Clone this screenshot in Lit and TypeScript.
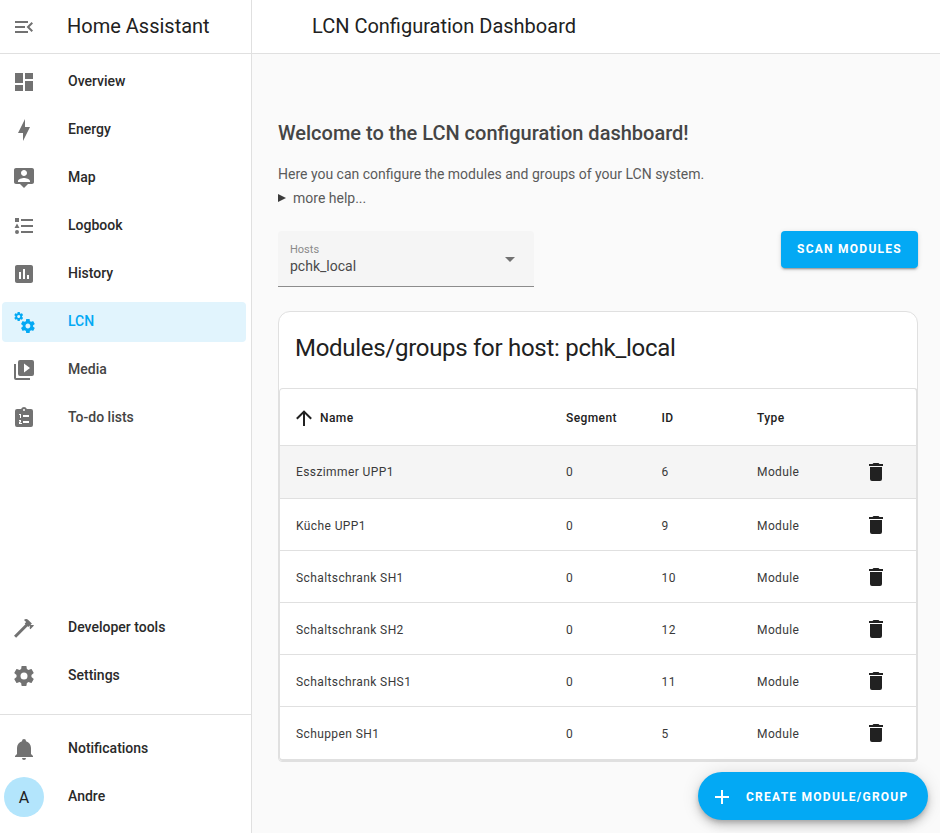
import { LitElement, css, html, svg } from 'lit';
import { customElement } from 'lit/decorators.js';

const ICONS: Record<string, string> = {
  menuOpen: 'M21,15.61L19.59,17L14.58,12L19.59,7L21,8.39L17.44,12L21,15.61M3,6H16V8H3V6M3,13V11H13V13H3M3,18V16H16V18H3Z',
  dashboard: 'M13,3V9H21V3M13,21H21V11H13M3,21H11V15H3M3,13H11V3H3V13Z',
  bolt: 'M11 15H6L13 1V9H18L11 23V15Z',
  map: 'M20 2H4C2.89 2 2 2.89 2 4V16C2 17.11 2.9 18 4 18H8L12 22L16 18H20C21.11 18 22 17.11 22 16V4C22 2.89 21.11 2 20 2M12 4C13.66 4 15 5.34 15 7C15 8.66 13.66 10 12 10C10.34 10 9 8.66 9 7C9 5.34 10.34 4 12 4M18 16H6V15C6 13 10 11.9 12 11.9C14 11.9 18 13 18 15V16Z',
  list: 'M5,9.5L7.5,14H2.5L5,9.5M3,4H7V8H3V4M5,20A2,2 0 0,0 7,18A2,2 0 0,0 5,16A2,2 0 0,0 3,18A2,2 0 0,0 5,20M9,5V7H21V5H9M9,19H21V17H9V19M9,13H21V11H9V13Z',
  chart: 'M19 3H5C3.9 3 3 3.9 3 5V19C3 20.1 3.9 21 5 21H19C20.1 21 21 20.1 21 19V5C21 3.9 20.1 3 19 3M9 17H7V10H9V17M13 17H11V7H13V17M17 17H15V13H17V17Z',
  cogs: 'M15.9,18.45C17.25,18.45 18.35,17.35 18.35,16C18.35,14.65 17.25,13.55 15.9,13.55C14.54,13.55 13.45,14.65 13.45,16C13.45,17.35 14.54,18.45 15.9,18.45M21.1,16.68L22.58,17.84C22.71,17.95 22.75,18.13 22.66,18.29L21.26,20.71C21.17,20.86 21,20.92 20.83,20.86L19.09,20.16C18.73,20.44 18.34,20.67 17.92,20.85L17.66,22.7C17.63,22.87 17.5,23 17.32,23H14.5C14.32,23 14.18,22.87 14.15,22.7L13.89,20.85C13.47,20.67 13.08,20.44 12.72,20.16L10.98,20.86C10.82,20.92 10.64,20.86 10.55,20.71L9.15,18.29C9.06,18.13 9.1,17.95 9.23,17.84L10.71,16.68L10.66,16L10.71,15.31L9.23,14.16C9.1,14.05 9.06,13.86 9.15,13.71L10.55,11.29C10.64,11.13 10.82,11.07 10.98,11.13L12.72,11.84C13.08,11.56 13.47,11.32 13.89,11.15L14.15,9.29C14.18,9.13 14.32,9 14.5,9H17.3C17.5,9 17.63,9.13 17.66,9.29L17.92,11.15C18.34,11.32 18.73,11.56 19.09,11.84L20.83,11.13C21,11.07 21.17,11.13 21.26,11.29L22.66,13.71C22.75,13.86 22.71,14.05 22.58,14.16L21.1,15.31L21.15,16L21.1,16.68M6.69,8.07C7.56,8.07 8.26,7.37 8.26,6.5C8.26,5.63 7.56,4.92 6.69,4.92A1.58,1.58 0 0,0 5.11,6.5C5.11,7.37 5.82,8.07 6.69,8.07M10.03,6.94L11,7.68C11.07,7.75 11.09,7.87 11.03,7.97L10.13,9.53C10.08,9.63 9.96,9.67 9.86,9.63L8.74,9.18L8,9.62L7.81,10.81C7.79,10.92 7.7,11 7.59,11H5.79C5.67,11 5.58,10.92 5.56,10.81L5.4,9.62L4.64,9.18L3.5,9.63C3.41,9.67 3.3,9.63 3.24,9.53L2.34,7.97C2.28,7.87 2.31,7.75 2.39,7.68L3.34,6.94L3.31,6.5L3.34,6.06L2.39,5.32C2.31,5.25 2.28,5.13 2.34,5.03L3.24,3.47C3.3,3.37 3.41,3.33 3.5,3.37L4.63,3.82L5.4,3.38L5.56,2.19C5.58,2.08 5.67,2 5.79,2H7.59C7.7,2 7.79,2.08 7.81,2.19L8,3.38L8.74,3.82L9.86,3.37C9.96,3.33 10.08,3.37 10.13,3.47L11.03,5.03C11.09,5.13 11.07,5.25 11,5.32L10.03,6.06L10.06,6.5L10.03,6.94Z',
  media: 'M4,6H2V20A2,2 0 0,0 4,22H18V20H4V6M20,2H8A2,2 0 0,0 6,4V16A2,2 0 0,0 8,18H20A2,2 0 0,0 22,16V4A2,2 0 0,0 20,2M12,14.5V5.5L18,10L12,14.5Z',
  todo: 'M19,3H14.82C14.4,1.84 13.3,1 12,1C10.7,1 9.6,1.84 9.18,3H5A2,2 0 0,0 3,5V19A2,2 0 0,0 5,21H19A2,2 0 0,0 21,19V5A2,2 0 0,0 19,3M12,3A1,1 0 0,1 13,4A1,1 0 0,1 12,5A1,1 0 0,1 11,4A1,1 0 0,1 12,3M11,9V11H17V9H11M11,15V17H17V15H11M7,8V9H8V12H9V8H7M7,14V15H8V15.5H7V18H10V17H8V16.5H9V14H7Z',
  hammer: 'M2 19.63L13.43 8.2L12.72 7.5L14.14 6.07L12 3.89C13.2 2.7 15.09 2.7 16.27 3.89L19.87 7.5L18.45 8.91H21.29L22 9.62L18.45 13.21L17.74 12.5V9.62L16.27 11.04L15.56 10.33L4.13 21.76L2 19.63Z',
  cog: 'M12,15.5A3.5,3.5 0 0,1 8.5,12A3.5,3.5 0 0,1 12,8.5A3.5,3.5 0 0,1 15.5,12A3.5,3.5 0 0,1 12,15.5M19.43,12.97C19.47,12.65 19.5,12.33 19.5,12C19.5,11.67 19.47,11.34 19.43,11L21.54,9.37C21.73,9.22 21.78,8.95 21.66,8.73L19.66,5.27C19.54,5.05 19.27,4.96 19.05,5.05L16.56,6.05C16.04,5.66 15.5,5.32 14.87,5.07L14.5,2.42C14.46,2.18 14.25,2 14,2H10C9.75,2 9.54,2.18 9.5,2.42L9.13,5.07C8.5,5.32 7.96,5.66 7.44,6.05L4.95,5.05C4.73,4.96 4.46,5.05 4.34,5.27L2.34,8.73C2.21,8.95 2.27,9.22 2.46,9.37L4.57,11C4.53,11.34 4.5,11.67 4.5,12C4.5,12.33 4.53,12.65 4.57,12.97L2.46,14.63C2.27,14.78 2.21,15.05 2.34,15.27L4.34,18.73C4.46,18.95 4.73,19.03 4.95,18.95L7.44,17.94C7.96,18.34 8.5,18.68 9.13,18.93L9.5,21.58C9.54,21.82 9.75,22 10,22H14C14.25,22 14.46,21.82 14.5,21.58L14.87,18.93C15.5,18.67 16.04,18.34 16.56,17.94L19.05,18.95C19.27,19.03 19.54,18.95 19.66,18.73L21.66,15.27C21.78,15.05 21.73,14.78 21.54,14.63L19.43,12.97Z',
  bell: 'M21,19V20H3V19L5,17V11C5,7.9 7.03,5.17 10,4.29C10,4.19 10,4.1 10,4A2,2 0 0,1 12,2A2,2 0 0,1 14,4C14,4.1 14,4.19 14,4.29C16.97,5.17 19,7.9 19,11V17L21,19M14,21A2,2 0 0,1 12,23A2,2 0 0,1 10,21',
  trash: 'M19,4H15.5L14.5,3H9.5L8.5,4H5V6H19M6,19A2,2 0 0,0 8,21H16A2,2 0 0,0 18,19V7H6V19Z',
  arrowUp: 'M13,20H11V8L5.5,13.5L4.08,12.08L12,4.16L19.92,12.08L18.5,13.5L13,8V20Z',
  plus: 'M19,13H13V19H11V13H5V11H11V5H13V11H19V13Z',
  menuDown: 'M7,10L12,15L17,10H7Z',
};

const icon = (name: string) =>
  html`<svg class="icon" viewBox="0 0 24 24">${svg`<path fill-rule="evenodd" d=${ICONS[name]}></path>`}</svg>`;

const TOP_NAV = [
  { label: 'Overview', icon: 'dashboard' },
  { label: 'Energy', icon: 'bolt' },
  { label: 'Map', icon: 'map' },
  { label: 'Logbook', icon: 'list' },
  { label: 'History', icon: 'chart' },
  { label: 'LCN', icon: 'cogs', active: true },
  { label: 'Media', icon: 'media' },
  { label: 'To-do lists', icon: 'todo' },
];

const MODULES = [
  { name: 'Esszimmer UPP1', id: 6 },
  { name: 'Küche UPP1', id: 9 },
  { name: 'Schaltschrank SH1', id: 10 },
  { name: 'Schaltschrank SH2', id: 12 },
  { name: 'Schaltschrank SHS1', id: 11 },
  { name: 'Schuppen SH1', id: 5 },
];

@customElement('app-root')
export class AppRoot extends LitElement {
  static styles = css`
    :host {
      display: flex;
      height: 833px;
      overflow: hidden;
      position: relative;
      font-family: Roboto, 'Liberation Sans', sans-serif;
      color: #212121;
      background: #fafafa;
    }

    .icon {
      display: block;
      width: 24px;
      height: 24px;
      flex: none;
      fill: currentColor;
    }

    /* sidebar */
    .sidebar {
      width: 252px;
      flex: none;
      box-sizing: border-box;
      display: flex;
      flex-direction: column;
      background: #fff;
      border-right: 1px solid #e0e0e0;
    }

    .brand {
      height: 54px;
      flex: none;
      box-sizing: border-box;
      display: flex;
      align-items: center;
      border-bottom: 1px solid #e0e0e0;
      padding-left: 12px;
      color: #727272;
    }

    .brand span {
      margin: 0 0 2px 31px;
      font-size: 20px;
      color: #212121;
    }

    .nav {
      padding: 4px 0 14px;
      flex: 1;
      display: flex;
      flex-direction: column;
    }

    .spacer {
      flex: 1;
    }

    .item {
      height: 40px;
      margin: 4px 5px 4px 2px;
      border-radius: 4px;
      display: flex;
      align-items: center;
      padding-left: 10px;
      font-size: 14px;
      font-weight: 500;
      color: #2a2a2a;
    }

    .item span {
      margin-bottom: 2px;
    }

    .item .icon {
      color: #727272;
      margin-right: 32px;
    }

    .item.active {
      background: #e1f4fd;
      color: #03a9f4;
    }

    .item.active .icon {
      color: #03a9f4;
    }

    .item.muted {
      color: #444;
    }

    .bottom {
      flex: none;
      height: 119px;
      box-sizing: border-box;
      display: flex;
      flex-direction: column;
      border-top: 1px solid #e0e0e0;
      padding-top: 10px;
    }

    .avatar {
      width: 40px;
      height: 40px;
      margin: 0 24px 0 -8px;
      border-radius: 50%;
      background: #b3e5fc;
      display: flex;
      align-items: center;
      justify-content: center;
      font-size: 16px;
      font-weight: 400;
      color: #212121;
    }

    /* main column */
    .main {
      flex: 1;
      min-width: 0;
      display: flex;
      flex-direction: column;
    }

    .topbar {
      height: 54px;
      flex: none;
      box-sizing: border-box;
      display: flex;
      align-items: center;
      padding: 0 0 2px 60px;
      background: #fff;
      border-bottom: 1px solid #e0e0e0;
      font-size: 20px;
      color: #212121;
    }

    .content {
      padding: 65px 22px 0 26px;
    }

    h2 {
      margin: 0;
      font-size: 20px;
      line-height: 28px;
      font-weight: 500;
      color: #454545;
    }

    .intro {
      margin: 15px 0 0;
      font-size: 14px;
      line-height: 24px;
      color: #5a5a5a;
    }

    .more {
      display: flex;
      align-items: center;
      font-size: 14px;
      line-height: 24px;
      color: #5a5a5a;
    }

    .more i {
      width: 0;
      height: 0;
      margin-right: 7px;
      border-left: 8px solid #3b3b3b;
      border-top: 4.5px solid transparent;
      border-bottom: 4.5px solid transparent;
    }

    .controls {
      margin-top: 21px;
      display: flex;
      justify-content: space-between;
      align-items: flex-start;
    }

    .select {
      width: 256px;
      height: 56px;
      box-sizing: border-box;
      padding: 12px 12px 0;
      position: relative;
      background: #f5f5f5;
      border-radius: 4px 4px 0 0;
      border-bottom: 1px solid #8c8c8c;
    }

    .select small {
      display: block;
      font-size: 11px;
      line-height: 13px;
      color: #8a8a8a;
    }

    .select div {
      font-size: 14px;
      line-height: 20px;
      color: #4a4a4a;
    }

    .select .icon {
      position: absolute;
      right: 12px;
      top: 16px;
      color: #727272;
    }

    .scan {
      height: 37px;
      width: 137px;
      box-sizing: border-box;
      padding-bottom: 1px;
      border-radius: 4px;
      background: #03a9f4;
      color: #fff;
      display: flex;
      align-items: center;
      justify-content: center;
      font-size: 12px;
      font-weight: 700;
      letter-spacing: 1.25px;
      box-shadow: 0 3px 1px -2px rgba(0, 0, 0, 0.2), 0 2px 2px 0 rgba(0, 0, 0, 0.14), 0 1px 5px 0 rgba(0, 0, 0, 0.12);
    }

    .card {
      margin-top: 24px;
      background: #fff;
      border: 1px solid #e0e0e0;
      border-radius: 12px 12px 4px 4px;
    }

    .card h1 {
      margin: 0;
      padding: 20px 16px 24px;
      font-size: 24px;
      line-height: 32px;
      font-weight: 400;
      letter-spacing: -0.012em;
      color: #212121;
    }

    .table {
      border: 1px solid #e0e0e0;
      border-right-width: 2px;
      border-bottom-width: 2px;
      border-radius: 4px;
      margin-right: -1px;
      padding-bottom: 1px;
    }

    .row {
      display: grid;
      grid-template-columns: 270px 95.5px 95.5px 1fr 52px;
      align-items: center;
      height: 52px;
      box-sizing: border-box;
      padding-left: 16px;
      border-top: 1px solid #e0e0e0;
      font-size: 12px;
      letter-spacing: 0.4px;
      color: #3a3a3a;
    }

    .row.first {
      height: 53px;
    }

    .row:not(.first) .text {
      padding-top: 2px;
    }

    .row.selected {
      background: #f5f5f5;
    }

    .row .icon {
      color: #212121;
    }

    .head {
      height: 56px;
      border-top: none;
      font-weight: 500;
      color: #212121;
    }

    .name {
      display: flex;
      align-items: center;
      gap: 4px;
    }

    .name .icon {
      margin-left: -4px;
    }

    .fab {
      position: absolute;
      left: 698px;
      top: 772px;
      width: 230px;
      height: 48px;
      box-sizing: border-box;
      padding: 1px 0 0 12px;
      border-radius: 24px;
      background: #03a9f4;
      color: #fff;
      display: flex;
      align-items: center;
      font-size: 12px;
      font-weight: 700;
      letter-spacing: 1.25px;
      box-shadow: 0 3px 5px -1px rgba(0, 0, 0, 0.2), 0 6px 10px 0 rgba(0, 0, 0, 0.14), 0 1px 18px 0 rgba(0, 0, 0, 0.12);
    }

    .fab .icon {
      margin-right: 12px;
    }
  `;

  private navItem(label: string, name: string, cls = '') {
    return html`<div class="item ${cls}">${icon(name)}<span>${label}</span></div>`;
  }

  render() {
    return html`
      <aside class="sidebar">
        <div class="brand">${icon('menuOpen')}<span>Home Assistant</span></div>
        <nav class="nav">
          ${TOP_NAV.map((n) =>
            this.navItem(n.label, n.icon, n.active ? 'active' : n.label === 'Media' || n.label === 'To-do lists' ? 'muted' : '')
          )}
          <div class="spacer"></div>
          ${this.navItem('Developer tools', 'hammer')} ${this.navItem('Settings', 'cog')}
        </nav>
        <div class="bottom">
          ${this.navItem('Notifications', 'bell')}
          <div class="item"><div class="avatar">A</div><span>Andre</span></div>
        </div>
      </aside>
      <div class="main">
        <header class="topbar">LCN Configuration Dashboard</header>
        <section class="content">
          <h2>Welcome to the LCN configuration dashboard!</h2>
          <p class="intro">Here you can configure the modules and groups of your LCN system.</p>
          <div class="more"><i></i>more help...</div>
          <div class="controls">
            <div class="select">
              <small>Hosts</small>
              <div>pchk_local</div>
              ${icon('menuDown')}
            </div>
            <div class="scan">SCAN MODULES</div>
          </div>
          <div class="card">
            <h1>Modules/groups for host: pchk_local</h1>
            <div class="table">
              <div class="row head">
                <div class="name text">${icon('arrowUp')}<span>Name</span></div>
                <div class="text">Segment</div>
                <div class="text">ID</div>
                <div class="text">Type</div>
                <div></div>
              </div>
              ${MODULES.map(
                (m, i) => html`<div class="row ${i === 0 ? 'first selected' : ''}">
                  <div class="text">${m.name}</div>
                  <div class="text">0</div>
                  <div class="text">${m.id}</div>
                  <div class="text">Module</div>
                  <div>${icon('trash')}</div>
                </div>`
              )}
            </div>
          </div>
        </section>
      </div>
      <div class="fab">${icon('plus')}<span>CREATE MODULE/GROUP</span></div>
    `;
  }
}
